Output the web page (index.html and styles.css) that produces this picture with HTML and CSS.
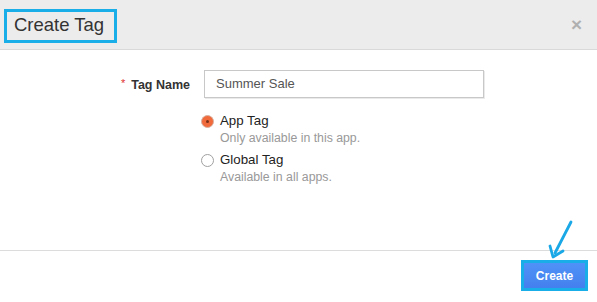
FILE: index.html
```html
<!DOCTYPE html>
<html>
<head>
<meta charset="utf-8">
<link rel="stylesheet" href="styles.css">
</head>
<body>
<div class="modal">
  <div class="header">
    <div class="title-box"><h1 class="title">Create Tag</h1></div>
    <span class="close">&times;</span>
  </div>
  <div class="content">
    <div class="row">
      <label class="label"><span class="req">*</span>Tag Name</label>
      <div class="input">Summer Sale</div>
    </div>
    <div class="options">
      <div class="option">
        <span class="radio checked"></span>
        <div class="opt-text">
          <div class="opt-title">App Tag</div>
          <div class="opt-desc">Only available in this app.</div>
        </div>
      </div>
      <div class="option">
        <span class="radio"></span>
        <div class="opt-text">
          <div class="opt-title">Global Tag</div>
          <div class="opt-desc">Available in all apps.</div>
        </div>
      </div>
    </div>
  </div>
  <div class="footer">
    <div class="btn-box"><button class="btn">Create</button></div>
    <svg class="arrow" width="30" height="40" viewBox="0 0 30 40">
      <path d="M24 2 L8 33" stroke="#1ba8e6" stroke-width="2.8" fill="none" stroke-linecap="round"/>
      <path d="M3 26 L6 37 L16 31" stroke="#1ba8e6" stroke-width="2.8" fill="none" stroke-linecap="round" stroke-linejoin="round"/>
    </svg>
  </div>
</div>
</body>
</html>
```
FILE: styles.css
```css
* { box-sizing: border-box; }
html, body { margin: 0; padding: 0; background: #fff; }
body { font-family: "Liberation Sans", Arial, sans-serif; color: #333; }
.modal { width: 597px; height: 302px; display: flex; flex-direction: column; position: relative; }
.header {
  height: 50px; background: #ececec; border-bottom: 1px solid #d9d9d9;
  display: flex; align-items: flex-start; justify-content: space-between;
  padding: 9px 15px 0 4px;
}
.title-box { border: 3px solid #1aaee8; padding: 1px 10px 4px 7px; height: 34px; }
.title { margin: 0; font-size: 18.5px; font-weight: normal; color: #333; line-height: 24px; }
.close { color: #b0b0b0; font-size: 19px; font-weight: bold; margin-top: 6px; line-height: 20px; }
.content { height: 201px; border-bottom: 1px solid #dcdcdc; padding-top: 20px; }
.row { display: flex; align-items: center; }
.label { width: 190px; text-align: right; font-size: 12.5px; font-weight: bold; color: #333; }
.req { color: #e03030; font-weight: normal; font-size: 11px; margin-right: 6px; vertical-align: 2px; }
.input {
  margin-left: 14px; width: 280px; height: 28px; border: 1px solid #c8c8c8;
  box-shadow: 1px 1px 0 #eaeaea; font-size: 13px; color: #555; padding: 6px 11px; line-height: 14px;
}
.options { margin-left: 201px; margin-top: 15px; display: flex; flex-direction: column; gap: 5px; }
.option { display: flex; align-items: flex-start; }
.radio {
  width: 13px; height: 13px; border-radius: 50%; border: 1px solid #a0a0a0; background: #fff;
  margin-top: 2px; flex: none; position: relative;
}
.radio.checked { background: #f06a3c; border-color: #d8b0a0; }
.radio.checked::after {
  content: ""; position: absolute; left: 4px; top: 4px; width: 3px; height: 3px; border-radius: 50%; background: #7a3018;
}
.opt-text { margin-left: 6px; }
.opt-title { font-size: 13.3px; color: #222; line-height: 16px; }
.opt-desc { font-size: 12.3px; color: #999; line-height: 18px; }
.footer { flex: 1; display: flex; justify-content: flex-end; align-items: flex-start; padding: 9px 9px 0 0; position: relative; }
.btn-box { border: 3px solid #1aaee8; }
.btn {
  display: block; width: 61px; height: 25px; border: none; margin: 0;
  background: linear-gradient(#4f92f7, #4480ee); color: #fff; font-family: "Liberation Sans", Arial, sans-serif;
  font-size: 12px; font-weight: bold; padding: 0;
}
.arrow { position: absolute; left: 547px; top: -31px; }
```
